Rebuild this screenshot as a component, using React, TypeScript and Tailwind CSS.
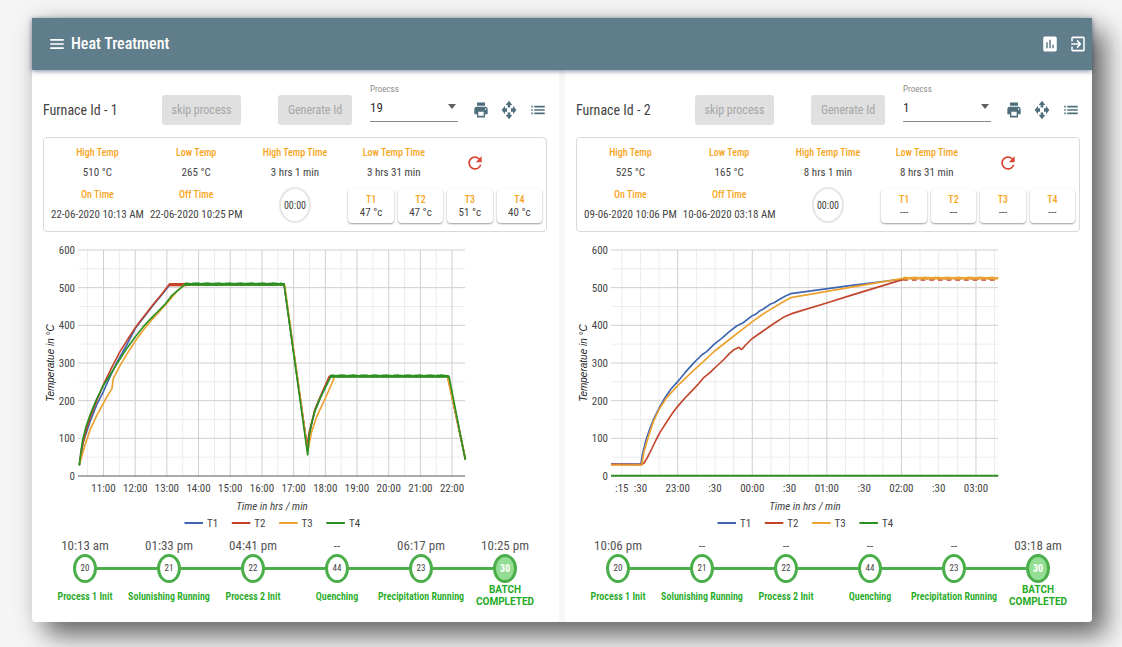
import React from "react";
import {
  MdMenu,
  MdAssessment,
  MdExitToApp,
  MdPrint,
  MdOpenWith,
  MdList,
  MdRefresh,
} from "react-icons/md";

type Step = { time: string; code: string; label: string };
type Tick = { x: number; label: string };
type Trace = { color: string; points: string; dash?: string; width?: number };
type Furnace = {
  id: number;
  process: string;
  readings: { title: string; value: string }[];
  onTime: string;
  offTime: string;
  probes: string[];
  steps: Step[];
  ticks: Tick[];
  major: number[];
  minor: number[];
  shift: number;
  traces: Trace[];
};

const BLUE = "#3f66b0";
const RED = "#c2452b";
const ORANGE = "#eda22f";
const GREEN = "#2a9120";

const range = (n: number) => Array.from({ length: n }, (_, i) => i);

/* A plateau with slight, irregular sensor jitter. */
const plateau = (from: number, to: number, y: number, amp: number) =>
  range(Math.floor((to - from) / 3) + 1)
    .map((i) => `${from + i * 3},${y + (((i * i * 7 + i * 3) % 11) / 5 - 1) * amp}`)
    .join(" ");

const labels = [
  "Process 1 Init",
  "Solunishing Running",
  "Process 2 Init",
  "Quenching",
  "Precipitation Running",
  "BATCH COMPLETED",
];
const codes = ["20", "21", "22", "44", "23", "30"];
const steps = (times: string[]): Step[] =>
  times.map((time, i) => ({ time, code: codes[i], label: labels[i] }));

const hourX = (i: number) => 60.5 + i * 31.69;
const quarterX = (i: number) => 45.8 + i * 18.64;

const furnaces: Furnace[] = [
  {
    id: 1,
    process: "19",
    readings: [
      { title: "High Temp", value: "510 °C" },
      { title: "Low Temp", value: "265 °C" },
      { title: "High Temp Time", value: "3 hrs 1 min" },
      { title: "Low Temp Time", value: "3 hrs 31 min" },
    ],
    onTime: "22-06-2020 10:13 AM",
    offTime: "22-06-2020 10:25 PM",
    probes: ["47 °c", "47 °c", "51 °c", "40 °c"],
    steps: steps(["10:13 am", "01:33 pm", "04:41 pm", "--", "06:17 pm", "10:25 pm"]),
    ticks: range(12).map((i) => ({ x: hourX(i), label: `${11 + i}:00` })),
    major: range(12).map(hourX),
    minor: range(12).map((i) => hourX(i - 0.5)),
    shift: -13,
    traces: [
      {
        color: BLUE,
        points: `148,690 160,620 180,560 200,510 220,470 240,425 262,380 290,330 316,280 345,242 370,210 395,180 418,151 ${plateau(422, 758, 149, 1)} 762,147 832,640 838,595 854,530 870,490 898,426 ${plateau(902, 1254, 423, 1)} 1306,672`,
      },
      {
        color: RED,
        points: `148,690 155,640 170,580 185,535 205,485 222,445 245,398 270,350 295,310 320,272 345,240 370,208 395,178 418,148 ${plateau(422, 758, 148, 1)} 762,147 831,632 838,590 854,526 870,487 898,424 ${plateau(902, 1254, 424, 1)} 1306,672`,
      },
      { color: RED, points: "418,149 470,149", width: 10 },
      {
        color: ORANGE,
        points: `148,690 165,630 182,580 202,538 212,520 228,490 246,460 250,430 270,392 292,355 316,318 340,285 363,257 385,233 410,205 440,170 460,152 ${plateau(468, 758, 149, 1)} 764,150 833,650 845,590 860,545 885,492 912,430 ${plateau(916, 1254, 424, 1)} 1306,668`,
      },
      {
        color: GREEN,
        points: `148,692 152,655 158,615 168,575 182,535 200,492 220,452 240,420 265,380 292,338 316,305 340,275 363,250 385,228 405,208 425,182 447,163 464,149 ${plateau(468, 758, 147, 3)} 762,146 833,660 838,600 845,565 854,530 870,490 885,460 902,426 ${plateau(906, 1254, 423, 3)} 1257,424 1306,675`,
      },
      { color: GREEN, points: "464,149 760,149", width: 7 },
      { color: GREEN, points: "902,425 1256,425", width: 7 },
    ],
  },
  {
    id: 2,
    process: "1",
    readings: [
      { title: "High Temp", value: "525 °C" },
      { title: "Low Temp", value: "165 °C" },
      { title: "High Temp Time", value: "8 hrs 1 min" },
      { title: "Low Temp Time", value: "8 hrs 31 min" },
    ],
    onTime: "09-06-2020 10:06 PM",
    offTime: "10-06-2020 03:18 AM",
    probes: ["---", "---", "---", "---"],
    steps: steps(["10:06 pm", "--", "--", "--", "--", "03:18 am"]),
    ticks: [
      { x: quarterX(0), label: ":15" },
      { x: quarterX(1), label: ":30" },
      { x: quarterX(3), label: "23:00" },
      { x: quarterX(5), label: ":30" },
      { x: quarterX(7), label: "00:00" },
      { x: quarterX(9), label: ":30" },
      { x: quarterX(11), label: "01:00" },
      { x: quarterX(13), label: ":30" },
      { x: quarterX(15), label: "02:00" },
      { x: quarterX(17), label: ":30" },
      { x: quarterX(19), label: "03:00" },
    ],
    major: [3, 7, 11, 15, 19].map(quarterX),
    minor: range(21).filter((i) => i % 4 !== 3).map(quarterX),
    shift: -6,
    traces: [
      { color: GREEN, points: "123,722 1285,722" },
      {
        color: BLUE,
        points: `123,687 213,687 217,660 228,615 240,580 252,550 268,518 285,488 303,462 323,440 345,413 370,385 395,360 410,350 432,328 455,310 478,290 500,273 510,268 517,265 530,255 547,242 557,238 570,227 580,222 600,208 612,203 630,192 645,184 662,176 840,152 1000,132 ${plateau(1003, 1284, 130, 2)}`,
      },
      {
        color: RED,
        points:
          "123,688 215,689 222,684 232,668 245,642 258,615 270,592 288,564 305,538 323,514 345,489 370,463 385,447 402,427 420,413 434,399 460,375 478,356 492,344 507,337 513,343 517,342 524,333 545,312 575,291 605,270 640,247 665,236 770,204 840,182 990,136 1000,134",
      },
      { color: RED, points: "1000,135 1285,135", dash: "14 12" },
      {
        color: ORANGE,
        points: `123,690 215,690 222,650 235,605 250,560 268,522 290,488 323,452 370,407 400,380 434,348 480,312 520,281 547,260 575,240 605,221 640,200 662,188 840,157 1000,130 ${plateau(1003, 1284, 129, 2)}`,
      },
      { color: ORANGE, points: "1000,130 1285,130", width: 7 },
    ],
  },
];

function Chart({ furnace }: { furnace: Furnace }) {
  return (
    <svg
      viewBox="0 0 504 290"
      className="mt-2 block w-full fill-[#444] font-['Roboto_Condensed','Liberation_Sans_Narrow',Roboto,sans-serif] text-[11px]"
      role="img"
      aria-label={`Temperature of furnace ${furnace.id} over time`}
    >
      {furnace.minor.map((x) => (
        <line key={x} x1={x} x2={x} y1={10} y2={236} stroke="#ececec" />
      ))}
      {range(6).map((i) => (
        <line key={i} x1={36} x2={422} y1={28.8 + i * 37.67} y2={28.8 + i * 37.67} stroke="#ececec" />
      ))}
      {furnace.major.map((x) => (
        <line key={x} x1={x} x2={x} y1={10} y2={236} stroke="#cfcfcf" />
      ))}
      {range(7).map((i) => (
        <g key={i}>
          <line
            x1={35}
            x2={422}
            y1={10 + i * 37.67}
            y2={10 + i * 37.67}
            stroke={i === 6 ? "#555" : "#cfcfcf"}
          />
          <text x={32} y={14 + i * 37.67} textAnchor="end">
            {600 - i * 100}
          </text>
        </g>
      ))}
      <g transform={`translate(${furnace.shift} -5) scale(0.33333)`} fill="none" strokeLinejoin="round">
        {furnace.traces.map((t, i) => (
          <polyline
            key={i}
            points={t.points}
            stroke={t.color}
            strokeWidth={t.width ?? 5}
            strokeDasharray={t.dash}
          />
        ))}
      </g>
      {furnace.ticks.map((t) => (
        <text key={t.x} x={t.x} y={252} textAnchor="middle">
          {t.label}
        </text>
      ))}
      <text x={229} y={270} textAnchor="middle" fontStyle="italic">
        Time in hrs / min
      </text>
      <text
        transform="translate(11 123) rotate(-90)"
        textAnchor="middle"
        className="fill-[#222] font-['Liberation_Sans',sans-serif] text-[10px] italic"
      >
        Temperatue in °C
      </text>
      {[BLUE, RED, ORANGE, GREEN].map((c, i) => (
        <g key={c}>
          <line x1={141.5 + i * 47.3} x2={160 + i * 47.3} y1={283} y2={283} stroke={c} strokeWidth={2} />
          <text x={164 + i * 47.3} y={287}>
            T{i + 1}
          </text>
        </g>
      ))}
    </svg>
  );
}

function Reading({ title, value }: { title: string; value: string }) {
  return (
    <div className="flex flex-col items-center whitespace-nowrap">
      <span className="text-[10px] leading-4 font-medium text-[#f7a51c]">{title}</span>
      <span className="mt-1 text-[11px] leading-4 text-[#444]">{value}</span>
    </div>
  );
}

function Stepper({ items }: { items: Step[] }) {
  return (
    <ol className="mt-[7px] grid grid-cols-6">
      {items.map((s, i) => {
        const last = i === items.length - 1;
        return (
          <li key={s.code} className="flex flex-col items-center whitespace-nowrap">
            <span className="text-[13px] leading-[17px] text-[#555]">{s.time}</span>
            <div className="flex w-full items-center">
              <span className={i === 0 ? "h-[3px] flex-1" : "h-[3px] flex-1 bg-[#4bae4b]"} />
              <span
                className={
                  last
                    ? "flex h-[29px] w-6 items-center justify-center rounded-[50%] border-3 border-[#4bae4b] bg-[#93de93] text-[10px] font-bold text-white"
                    : "flex h-[29px] w-6 items-center justify-center rounded-[50%] border-3 border-[#4bae4b] text-[9px] text-[#444]"
                }
              >
                {s.code}
              </span>
              <span className={last ? "h-[3px] flex-1" : "h-[3px] flex-1 bg-[#4bae4b]"} />
            </div>
            <span
              className={
                last
                  ? "mt-px w-16 text-center font-['Roboto',sans-serif] text-[10px] leading-3 font-bold whitespace-normal text-[#1fab1f]"
                  : "mt-[6px] text-[10px] leading-4 font-semibold text-[#1fab1f]"
              }
            >
              {s.label}
            </span>
          </li>
        );
      })}
    </ol>
  );
}

function Panel({ furnace }: { furnace: Furnace }) {
  const selectId = `process-${furnace.id}`;
  return (
    <section className="flex flex-col rounded-b bg-white pt-[14px] pr-3 pb-[14px] pl-[11px]">
      <div className="grid h-[52px] grid-cols-[119fr_79fr_37fr_74fr_18fr_88fr_15fr_74fr] items-center">
        <h2 className="text-[14px] whitespace-nowrap text-[#444]">Furnace Id - {furnace.id}</h2>
        <button
          disabled
          className="h-[30px] rounded-[3px] bg-[#e0e0e0] text-[12px] whitespace-nowrap text-[#a6a6a6]"
        >
          skip process
        </button>
        <span />
        <button
          disabled
          className="h-[30px] rounded-[3px] bg-[#e0e0e0] text-[12px] whitespace-nowrap text-[#a6a6a6]"
        >
          Generate Id
        </button>
        <span />
        <div className="relative flex flex-col self-start">
          <label htmlFor={selectId} className="text-[9px] leading-[11px] text-[#8d8d8d]">
            Proecss
          </label>
          <select
            id={selectId}
            defaultValue={furnace.process}
            className="h-[27px] w-full appearance-none border-b border-[#8a8a8a] bg-transparent text-[13px] text-[#333]"
          >
            <option>{furnace.process}</option>
          </select>
          <svg viewBox="0 0 8 5" className="pointer-events-none absolute top-5 right-[2px] h-[5px] w-2 fill-[#616161]">
            <path d="M0 0h8L4 5z" />
          </svg>
        </div>
        <span />
        <div className="flex justify-between text-[#4f6f7d]">
          <button aria-label="Print">
            <MdPrint className="h-5 w-4" preserveAspectRatio="none" />
          </button>
          <button aria-label="Move">
            <MdOpenWith className="h-5 w-4" preserveAspectRatio="none" />
          </button>
          <button aria-label="List">
            <MdList className="h-5 w-[18px]" preserveAspectRatio="none" />
          </button>
        </div>
      </div>

      <div className="mt-px grid grid-cols-[repeat(5,minmax(0,1fr))] rounded-[4px] border border-[#d9d9d9] pt-[7px] pr-1 pb-2 pl-1">
        {furnace.readings.map((r) => (
          <Reading key={r.title} title={r.title} value={r.value} />
        ))}
        <button aria-label="Refresh" className="ml-[22px] self-center justify-self-start text-[#dc4433]">
          <MdRefresh className="h-5 w-5" preserveAspectRatio="none" />
        </button>
        <div className="mt-[6px]">
          <Reading title="On Time" value={furnace.onTime} />
        </div>
        <div className="mt-[6px]">
          <Reading title="Off Time" value={furnace.offTime} />
        </div>
        <div className="flex items-end justify-center">
          <span className="flex h-9 w-8 items-center justify-center rounded-[50%] border-2 border-[#e6e6e6] text-[10px] text-[#444]">
            00:00
          </span>
        </div>
        <div className="col-span-2 mt-2 grid h-[34px] grid-cols-4 gap-1 pl-1">
          {furnace.probes.map((p, i) => (
            <div
              key={i}
              className="flex flex-col items-center justify-center rounded-[4px] bg-white shadow-[0_1px_2px_rgba(0,0,0,0.4)]"
            >
              <span className="text-[10px] leading-[13px] font-medium text-[#f7a51c]">T{i + 1}</span>
              <span className="text-[11px] leading-[14px] text-[#444]">{p}</span>
            </div>
          ))}
        </div>
      </div>

      <Chart furnace={furnace} />
      <Stepper items={furnace.steps} />
    </section>
  );
}

export default function App() {
  return (
    <div className="min-h-screen bg-[#f5f5f5] pt-[18px] pr-[30px] pb-[25px] pl-8 font-['Roboto_Condensed','Liberation_Sans_Narrow',Roboto,sans-serif]">
      <div className="rounded-b bg-[#f7f7f7] shadow-[14px_14px_26px_rgba(0,0,0,0.55),0_0_24px_rgba(0,0,0,0.1)]">
        <header className="relative flex h-[52px] items-center bg-[#607d8b] pr-[5px] pl-4 text-white shadow-[0_1px_5px_rgba(40,50,90,0.6)]">
          <button aria-label="Menu">
            <MdMenu className="h-5 w-[18px]" preserveAspectRatio="none" />
          </button>
          <h1 className="ml-[5px] flex-1 text-[16px] font-medium">Heat Treatment</h1>
          <button aria-label="Reports">
            <MdAssessment className="h-5 w-[18px]" preserveAspectRatio="none" />
          </button>
          <button aria-label="Sign out" className="ml-[10px]">
            <MdExitToApp className="h-5 w-[18px]" preserveAspectRatio="none" />
          </button>
        </header>
        <main className="grid grid-cols-2 gap-x-[6px]">
          {furnaces.map((f) => (
            <Panel key={f.id} furnace={f} />
          ))}
        </main>
      </div>
    </div>
  );
}
